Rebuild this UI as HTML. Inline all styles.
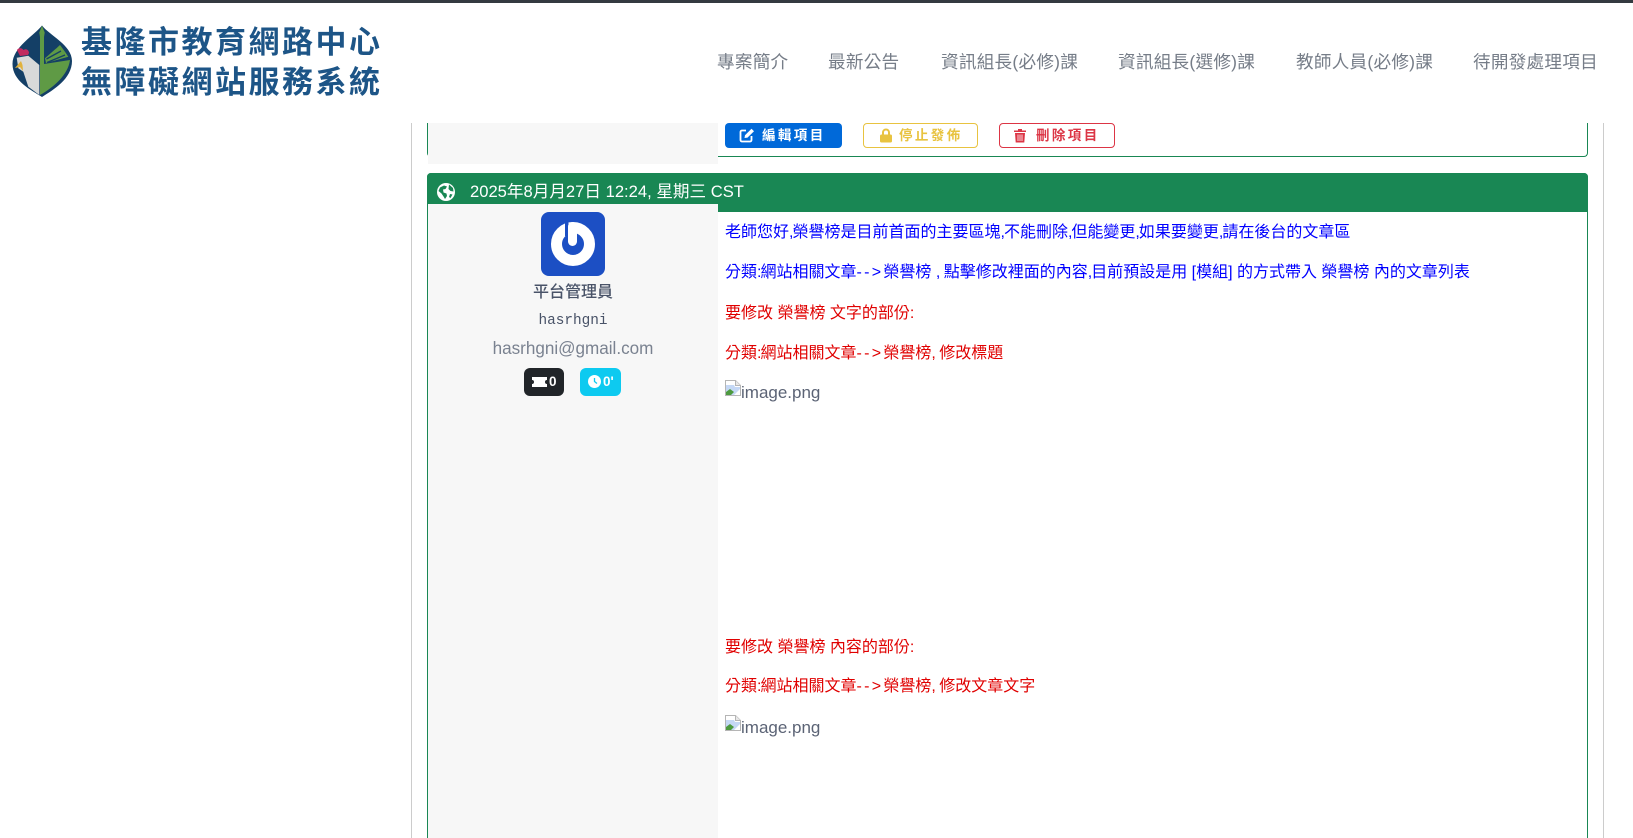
<!DOCTYPE html>
<html lang="zh-Hant">
<head>
<meta charset="utf-8">
<title>基隆市教育網路中心 無障礙網站服務系統</title>
<style>
html,body{margin:0;padding:0;width:1633px;height:838px;overflow:hidden;background:#fff;}
body{position:relative;font-family:"Liberation Sans","Noto Sans CJK TC",sans-serif;}
.a{position:absolute;white-space:nowrap;}
.t{position:absolute;white-space:nowrap;font-size:16px;line-height:20px;left:725px;}
.t i{font-style:normal;letter-spacing:-1px}
.t b{font-weight:400;letter-spacing:2.300px}
.blue{color:#0000ff}.red{color:#e00000}
.nav{position:absolute;top:50px;line-height:24px;font-size:17.6px;letter-spacing:.25px;color:#767d88;white-space:nowrap;}
.btn{position:absolute;top:123px;height:25px;box-sizing:border-box;border-radius:4px;font-size:13.5px;font-weight:700;letter-spacing:2.4px;line-height:23px;white-space:nowrap;}
.btn svg{position:absolute;top:5px;}
.btn span{position:absolute;top:0;}
.img{position:absolute;left:725px;height:20px;font-size:17px;line-height:20px;color:#5b6375;padding-left:16px;}
.img svg{position:absolute;left:0;top:-3px;}
</style>
</head>
<body>
<!-- top bar -->
<div class="a" style="left:0;top:0;width:1633px;height:3px;background:#343a40"></div>

<!-- logo -->
<svg class="a" style="left:12px;top:25px" width="62" height="73" viewBox="0 0 62 73">
<path d="M30 .5C37 10 60 20 60 36C60 54 41 65 30 72C19 65 .5 56 .5 39C.5 22 23 10 30 .5Z" fill="#143f66"/>
<path d="M4.700 32.700L16.300 30.700L27.300 40V70L16.300 61.700L11.300 46.700L6.300 43.300Z" fill="#d8d9d9"/>
<path d="M5 25C7 22 10 23 11.500 25C14 23 17 25 17 28L16 30L8 31Z" fill="#c22a5f"/>
<path d="M9 36L3 43L8 42L11 46L10.500 40Z" fill="#e1b23d"/>
<path d="M28 70V43L28 12L27.300 7.500L30 .7L32.700 7.500L32 12V39L58 35C56 50 42 62 28 70Z" fill="#5f9a45"/>
<path d="M33 33.300L48 20L53 26.700L56.300 31.700L34 38Z" fill="#5f9a45"/>
<path d="M34 30L45 22M34.500 34L49 26M35 37.500L53 30" stroke="#143f66" stroke-width="1.300" fill="none"/>
</svg>
<div class="a" style="left:81px;top:21px;font-size:31px;line-height:38px;font-weight:700;color:#1d5587;letter-spacing:2.500px;font-family:'Noto Sans CJK TC',sans-serif">基隆市教育網路中心</div>
<div class="a" style="left:81px;top:61px;font-size:31px;line-height:38px;font-weight:700;color:#1d5587;letter-spacing:2.500px;font-family:'Noto Sans CJK TC',sans-serif">無障礙網站服務系統</div>

<!-- nav -->
<div class="nav" style="left:717px">專案簡介</div>
<div class="nav" style="left:828px">最新公告</div>
<div class="nav" style="left:941px">資訊組長(必修)課</div>
<div class="nav" style="left:1118px">資訊組長(選修)課</div>
<div class="nav" style="left:1296px">教師人員(必修)課</div>
<div class="nav" style="left:1473px">待開發處理項目</div>

<!-- outer lines -->
<div class="a" style="left:411px;top:123px;width:1px;height:715px;background:#cccccc"></div>
<div class="a" style="left:1603px;top:123px;width:1px;height:715px;background:#cccccc"></div>

<!-- first card remainder -->
<div class="a" style="left:427px;top:123px;width:1161px;height:34px;box-sizing:border-box;border:1px solid #198754;border-top:0;border-radius:0 0 4px 4px"></div>
<div class="a" style="left:428px;top:123px;width:290px;height:41px;background:#f7f7f7"></div>

<div class="btn" style="left:725px;width:117px;background:#0069d9;color:#fff">
<svg style="left:14px" width="16" height="15" viewBox="0 0 16 15"><path d="M7 2.500H3A1.500 1.500 0 0 0 1.500 4V12A1.500 1.500 0 0 0 3 13.500H11A1.500 1.500 0 0 0 12.500 12V8" fill="none" stroke="#fff" stroke-width="1.800"/><path d="M5.500 10L6 7.200L12.500 .8L15 3.300L8.500 9.600Z" fill="#fff"/></svg>
<span style="left:37px;top:1px">編輯項目</span></div>
<div class="btn" style="left:863px;width:115px;border:1px solid #e8c340;color:#e8c340">
<svg style="left:15px;top:4px" width="14" height="15" viewBox="0 0 13 15"><path d="M3.500 7V4.500A3 3 0 0 1 9.500 4.500V7" fill="none" stroke="#e8c340" stroke-width="2"/><rect x="0.500" y="6.500" width="12" height="8" rx="1.500" fill="#e8c340"/></svg>
<span style="left:35px">停止發佈</span></div>
<div class="btn" style="left:999px;width:116px;border:1px solid #dc3545;color:#dc3545">
<svg style="left:13px;top:4px" width="14" height="15" viewBox="0 0 13 15"><path d="M0.500 2.500H12.500V4H0.500ZM4.500 1H8.500V2.500H4.500ZM1.500 5H11.500L10.800 14.500H2.200Z" fill="#dc3545"/><path d="M4.500 6.500V13M6.500 6.500V13M8.500 6.500V13" stroke="#fff" stroke-width=".8"/></svg>
<span style="left:36px">刪除項目</span></div>

<!-- second card -->
<div class="a" style="left:427px;top:173px;width:1161px;height:700px;box-sizing:border-box;border:1px solid #198754;border-radius:4px 4px 0 0"></div>
<div class="a" style="left:427px;top:173px;width:1161px;height:39px;background:#198754;border-radius:4px 4px 0 0"></div>
<div class="a" style="left:428px;top:204px;width:290px;height:634px;background:#f7f7f7"></div>

<svg class="a" style="left:437px;top:183px" width="18" height="18" viewBox="0 0 18 18"><circle cx="9" cy="9" r="9" fill="#fff"/><path d="M3 4.500L7 2.500L10 3.500L8.500 6L6 6.500L6.500 9.500L9.500 10.500L10 13L8 16L6.500 13.500L4.500 10.500L1.500 8ZM12 1.500L16 5L16.500 8.500L13.500 8L11.500 6ZM13 11L15.500 11.500L13.500 15L12 14Z" fill="#198754"/></svg>
<div class="a" style="left:470px;top:181px;font-size:16.600px;line-height:22px;color:#fff">2025年8月月27日 12:24, 星期三 CST</div>

<!-- profile -->
<div class="a" style="left:541px;top:212px;width:64px;height:64px;border-radius:8px;background:#1c4fc4"></div>
<svg class="a" style="left:541px;top:212px" width="64" height="64" viewBox="0 0 64 64"><circle cx="32" cy="32" r="16.500" fill="none" stroke="#fff" stroke-width="11"/><rect x="24" y="7" width="3.500" height="17" fill="#1c4fc4"/><path d="M31.500 14.500V29.500" stroke="#fff" stroke-width="9" stroke-linecap="round"/></svg>
<div class="a" style="left:428px;width:290px;text-align:center;top:282px;font-size:16px;line-height:22px;font-weight:500;color:#495368">平台管理員</div>
<div class="a" style="left:428px;width:290px;text-align:center;top:311px;font-size:14.400px;line-height:20px;color:#495368;font-family:'Liberation Mono',monospace">hasrhgni</div>
<div class="a" style="left:428px;width:290px;text-align:center;top:338px;font-size:17.100px;line-height:22px;color:#7a8290">hasrhgni@gmail.com</div>

<div class="a" style="left:524px;top:368px;width:40px;height:28px;border-radius:6px;background:#212529"></div>
<svg class="a" style="left:532px;top:377px" width="15" height="10" viewBox="0 0 15 10"><path d="M0 0H15V3A2 2 0 0 0 15 7V10H0V7A2 2 0 0 0 0 3Z" fill="#fff"/></svg>
<div class="a" style="left:549px;top:373px;font-size:13.500px;line-height:18px;font-weight:700;color:#fff">0</div>
<div class="a" style="left:580px;top:368px;width:41px;height:28px;border-radius:6px;background:#0dcaf0"></div>
<svg class="a" style="left:588px;top:375px" width="13" height="13" viewBox="0 0 13 13"><circle cx="6.500" cy="6.500" r="6.500" fill="#fff"/><path d="M6.500 3V6.500L9 8.500" stroke="#0dcaf0" stroke-width="1.300" fill="none"/></svg>
<div class="a" style="left:603px;top:373px;font-size:13.500px;line-height:18px;font-weight:700;color:#fff">0'</div>

<!-- content -->
<div class="t blue" style="top:223px">老師您好<i>,</i>榮譽榜是目前首面的主要區塊<i>,</i>不能刪除<i>,</i>但能變更<i>,</i>如果要變更<i>,</i>請在後台的文章區</div>
<div class="t blue" style="top:263px">分類<i>:</i>網站相關文章<b>--&gt;</b>榮譽榜 <i>,</i> 點擊修改裡面的內容<i>,</i>目前預設是用 [模組] 的方式帶入 榮譽榜 內的文章列表</div>
<div class="t red" style="top:304px">要修改 榮譽榜 文字的部份<i>:</i></div>
<div class="t red" style="top:344px">分類<i>:</i>網站相關文章<b>--&gt;</b>榮譽榜<i>,</i> 修改標題</div>
<div class="img" style="top:383px"><svg width="16" height="16" viewBox="0 0 16 16"><path d="M0.500 .5H10.500L15.500 5.500V15.500H0.500Z" fill="#fff" stroke="#b5b5b5"/><path d="M10.500 .5V5.500H15.500" fill="#e8e8e8" stroke="#b5b5b5"/><path d="M1 5H9L10 7H15V9L9 15H1Z" fill="#c5d8f5"/><path d="M1 15V12L5 9L9 12L6 15Z" fill="#4d9a3f"/></svg>image.png</div>
<div class="t red" style="top:638px">要修改 榮譽榜 內容的部份<i>:</i></div>
<div class="t red" style="top:677px">分類<i>:</i>網站相關文章<b>--&gt;</b>榮譽榜<i>,</i> 修改文章文字</div>
<div class="img" style="top:718px"><svg width="16" height="16" viewBox="0 0 16 16"><path d="M0.500 .5H10.500L15.500 5.500V15.500H0.500Z" fill="#fff" stroke="#b5b5b5"/><path d="M10.500 .5V5.500H15.500" fill="#e8e8e8" stroke="#b5b5b5"/><path d="M1 5H9L10 7H15V9L9 15H1Z" fill="#c5d8f5"/><path d="M1 15V12L5 9L9 12L6 15Z" fill="#4d9a3f"/></svg>image.png</div>
</body>
</html>
